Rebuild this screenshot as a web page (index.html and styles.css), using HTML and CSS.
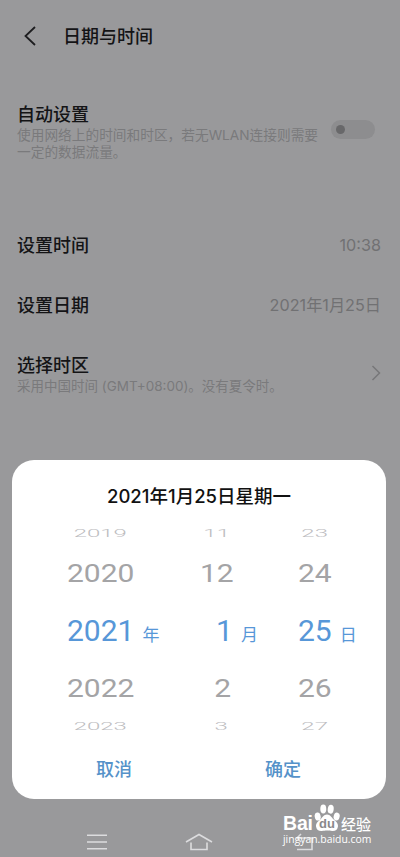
FILE: index.html
```html
<!DOCTYPE html>
<html lang="zh-CN">
<head>
<meta charset="utf-8">
<title>日期与时间</title>
<link rel="stylesheet" href="styles.css">
</head>
<body>
<div class="screen">
  <header class="header">
    <svg class="back" width="14" height="22" viewBox="0 0 14 22"><path d="M12 2 2.5 11l9.5 9"/></svg>
    <h1>日期与时间</h1>
  </header>
  <main class="settings">
    <section class="row row-auto">
      <div class="label">
        <h2>自动设置</h2>
        <p>使用网络上的时间和时区，若无WLAN连接则需要<br>一定的数据流量。</p>
      </div>
      <span class="toggle"></span>
    </section>
    <section class="row"><h2>设置时间</h2><span class="value">10:38</span></section>
    <section class="row"><h2>设置日期</h2><span class="value date">2021年1月25日</span></section>
    <section class="row row-zone">
      <div class="label">
        <h2>选择时区</h2>
        <p class="zone">采用中国时间 (GMT+08:00)。没有夏令时。</p>
      </div>
      <svg class="chevron" width="10" height="18" viewBox="0 0 10 18"><path d="M1.5 2 8.5 9l-7 7"/></svg>
    </section>
  </main>
  <section class="dialog">
    <h3>2021年1月25日星期一</h3>
    <div class="picker">
      <div class="wheel year">
        <span class="far">2019</span><span class="near">2020</span>
        <span class="current">2021<small>年</small></span>
        <span class="near">2022</span><span class="far">2023</span>
      </div>
      <div class="wheel month">
        <span class="far">11</span><span class="near">12</span>
        <span class="current">1<small>月</small></span>
        <span class="near">2</span><span class="far">3</span>
      </div>
      <div class="wheel day">
        <span class="far">23</span><span class="near">24</span>
        <span class="current">25<small>日</small></span>
        <span class="near">26</span><span class="far">27</span>
      </div>
    </div>
    <div class="actions"><span>取消</span><span>确定</span></div>
  </section>
  <nav class="navbar">
    <svg width="22" height="18" viewBox="0 0 22 18"><path d="M1 2.2h20M1 9h20M1 15.8h20"/></svg>
    <svg width="28" height="18" viewBox="0 0 28 18"><path d="M1 9 14 1.5 27 9M6 9.5V16.5H22V9.5"/></svg>
    <svg width="22" height="18" viewBox="0 0 22 18"><path d="M6 1 2 5l4 4M2 5h15v11.500H2"/></svg>
  </nav>
  <div class="watermark">
    <div class="brand">
      <span class="bai">Bai</span>
      <span class="paw">
        <svg width="26" height="28" viewBox="0 0 28 29" preserveAspectRatio="none">
          <ellipse cx="4" cy="13" rx="3.2" ry="4.2" transform="rotate(-12 4 13)"/>
          <ellipse cx="10" cy="5.2" rx="3.2" ry="4.6"/>
          <ellipse cx="18" cy="5.4" rx="3.2" ry="4.6" transform="rotate(8 18 5.4)"/>
          <ellipse cx="24.4" cy="13" rx="3.2" ry="4.2" transform="rotate(15 24.4 13)"/>
          <path d="M14 11c3.500 0 4.800 3 7.200 5.100 2.500 2.100 5 4.100 4.600 7.200-.4 3.400-3 5-6.300 4.700-2-.2-3.400-.5-5.500-.5s-3.500.3-5.500.5c-3.300.3-5.900-1.300-6.300-4.700-.4-3.100 2.100-5.100 4.600-7.200C9.200 14 10.500 11 14 11z"/>
        </svg>
        <b>du</b>
      </span>
      <span class="exp">经验</span>
    </div>
    <div class="url">jingyan.baidu.com</div>
  </div>
</div>
</body>
</html>
```

FILE: styles.css
```css
* { box-sizing: border-box; }
body {
  margin: 0;
  font-family: Inter, "Noto Sans CJK SC", sans-serif;
}
h1, h2, h3, p { margin: 0; white-space: nowrap; }
svg { display: block; fill: none; }
.screen {
  position: relative;
  display: flex;
  flex-direction: column;
  width: 400px;
  height: 857px;
  overflow: hidden;
  background: #99999b;
}
.header {
  display: flex;
  align-items: center;
  height: 71px;
  padding-left: 23px;
}
.back { stroke: #1d1d1f; stroke-width: 1.8; }
.header h1 {
  margin: 2px 0 0 26px;
  font-size: 18px;
  line-height: 24px;
  font-weight: 500;
  color: #141416;
}
.settings { height: 389px; padding: 1px 19px 0 17px; }
.row {
  display: flex;
  align-items: center;
  justify-content: space-between;
  height: 60px;
}
.row-auto { height: 144px; align-items: flex-start; padding: 31px 6px 0 0; }
.row-zone { align-items: flex-end; }
.row h2 {
  font-size: 18px;
  line-height: 24px;
  font-weight: 500;
  color: #141416;
}
.row p {
  font-size: 13.7px;
  line-height: 16.5px;
  color: #7a7a7c;
}
.row .zone { font-size: 13.5px; }
.row-zone .chevron { margin-bottom: 14px; }
.row-zone .label { margin-bottom: 2px; }
.value {
  margin-top: -2px;
  font-size: 16.2px;
  line-height: 20px;
  color: #717173;
}
.toggle {
  width: 44px;
  height: 19px;
  margin-top: 17px;
  padding: 5px;
  border-radius: 10px;
  background: #8d8d8f;
}
.toggle::before {
  content: "";
  display: block;
  width: 9px;
  height: 9px;
  border-radius: 50%;
  background: #68686a;
}
.chevron { stroke: #777779; stroke-width: 1.5; }
.dialog {
  display: flex;
  flex-direction: column;
  width: 374px;
  height: 339px;
  margin-left: 12px;
  border-radius: 22px;
  background: #fff;
}
.dialog h3 {
  margin-top: 24px;
  text-align: center;
  font-size: 18.5px;
  line-height: 24px;
  font-weight: 500;
  color: #111;
}
.picker {
  display: grid;
  grid-template-columns: 149px 87px 110px;
  height: 220px;
  margin-top: 12px;
}
.wheel {
  display: grid;
  grid-template-rows: 26px 54px 66px 43px 34px;
  align-items: center;
  font: 30px/30px Roboto, "Noto Sans CJK SC", sans-serif;
}
.wheel span { justify-self: start; color: #a4a4a6; }
.year { padding-left: 55px; }
.month { padding-left: 39px; }
.day { padding-left: 50px; }
.month span { min-width: 31px; text-align: right; }
.wheel .near { transform: scaleY(.85); }
.wheel .far { font-weight: 300; transform: scale(.8, .38); color: #bdbdbf; }
.wheel .current { color: #5797d8; white-space: nowrap; }
.month .current { padding-left: 16px; }
.wheel small { margin-left: 8px; font-size: 17px; }
.actions {
  display: grid;
  grid-template-columns: 204px 134px;
  margin-top: 15px;
  text-align: center;
  font-size: 18px;
  line-height: 30px;
  font-weight: 500;
  color: #5592c9;
}
.navbar {
  display: flex;
  justify-content: space-between;
  align-items: center;
  height: 58px;
  padding: 28px 83px 0 86px;
}
.navbar svg { stroke: #dcdcde; stroke-width: 1.6; }
.navbar svg:nth-child(2) { margin-right: -1px; margin-left: -6px; }
.watermark {
  position: absolute;
  left: 283px;
  top: 803px;
  width: 92px;
  color: #fff;
}
.brand { display: flex; align-items: flex-end; height: 29px; }
.bai { width: 31px; font: 700 19.5px/18px "Liberation Sans", sans-serif; letter-spacing: -.2px; }
.paw { position: relative; width: 26px; height: 28px; margin-right: 1px; }
.paw svg { fill: #fff; }
.paw b {
  position: absolute;
  left: 5px;
  top: 12px;
  font: 700 13px/15px "Liberation Sans", sans-serif;
  color: #89898b;
}
.exp { font: 500 15px/17px "Noto Sans CJK SC", sans-serif; }
.url { font: 10.4px/14px "Open Sans", sans-serif; }
```
